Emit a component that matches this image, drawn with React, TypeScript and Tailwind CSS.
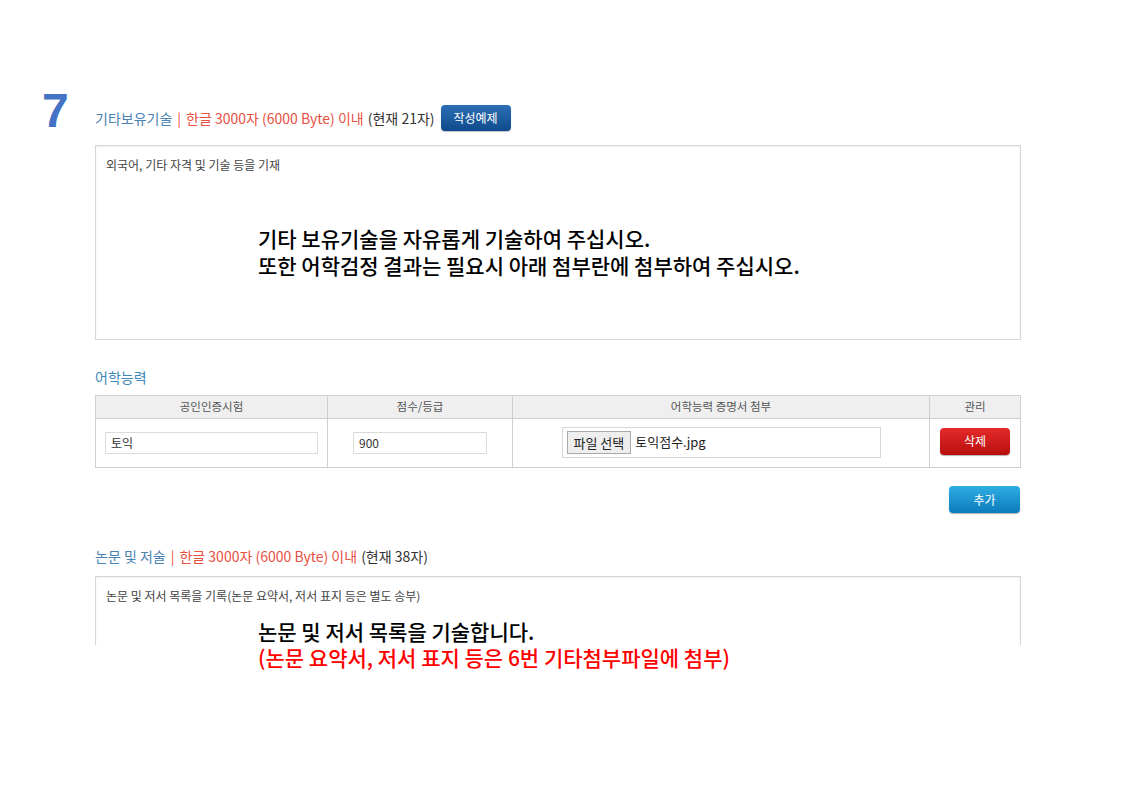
const KR = "font-['Noto_Sans_CJK_KR','Noto_Sans',sans-serif]";

const Heading = ({ title, count }: { title: string; count: number }) => (
  <div className={`flex items-center h-[26px] text-[14px] ${KR}`}>
    <span className="text-[#4a82b2]">{title}</span>
    <span className="text-[#e8503f] mx-[5px]">|</span>
    <span className="text-[#e8503f]">한글 3000자 (6000 Byte) 이내</span>
    <span className="text-[#333] ml-[4px]">(현재 {count}자)</span>
  </div>
);

const TextBox = ({
  placeholder,
  heightClass,
  bottom = true,
  children,
}: {
  placeholder: string;
  heightClass: string;
  bottom?: boolean;
  children: React.ReactNode;
}) => (
  <div
    className={`${heightClass} border-x border-t border-[#d6d6d6] shadow-[inset_0_1px_2px_rgba(0,0,0,0.07)] ${
      bottom ? "border-b" : ""
    } bg-white`}
  >
    <p className={`pl-[10px] pt-[11px] text-[12px] leading-[16px] text-[#444] ${KR}`}>
      {placeholder}
    </p>
    {children}
  </div>
);

export default function App() {
  return (
    <div className="w-[1121px] h-[793px] bg-white overflow-hidden">
      <div className="flex pt-[87px] pl-[42px]">
        <div className="w-[53px] text-[48px] font-bold leading-none text-[#4472c4] font-['Liberation_Sans',Arial,sans-serif]">
          7
        </div>

        <div className="w-[926px] mt-[18px]">
          <div className="flex items-center">
            <Heading title="기타보유기술" count={21} />
            <button
              className={`ml-[6px] w-[70px] h-[26px] rounded-[4px] bg-gradient-to-b from-[#2c6fb5] to-[#0e4b8d] text-white text-[12px] shadow-[0_1px_1px_rgba(0,0,0,0.25)] ${KR}`}
            >
              작성예제
            </button>
          </div>

          <div className="mt-[14px]">
            <TextBox placeholder="외국어, 기타 자격 및 기술 등을 기재" heightClass="h-[195px]">
              <div
                className={`mt-[52px] ml-[162px] text-[21px] leading-[27px] font-medium text-black ${KR}`}
              >
                <p>기타 보유기술을 자유롭게 기술하여 주십시오.</p>
                <p>또한 어학검정 결과는 필요시 아래 첨부란에 첨부하여 주십시오.</p>
              </div>
            </TextBox>
          </div>

          <p className={`mt-[27px] h-[20px] leading-[20px] text-[14px] text-[#3a86b8] ${KR}`}>
            어학능력
          </p>

          <table className={`mt-[8px] w-full border-collapse ${KR}`}>
            <thead>
              <tr className="h-[23px] bg-[#efefef] text-[11.5px] text-[#555]">
                <th className="w-[232px] border border-[#cfcfcf] font-normal">공인인증시험</th>
                <th className="w-[185px] border border-[#cfcfcf] font-normal">점수/등급</th>
                <th className="w-[417px] border border-[#cfcfcf] font-normal">어학능력 증명서 첨부</th>
                <th className="border border-[#cfcfcf] font-normal">관리</th>
              </tr>
            </thead>
            <tbody>
              <tr className="h-[49px]">
                <td className="border border-[#cfcfcf]">
                  <div className="mx-auto w-[213px] h-[22px] border border-[#dcdcdc] pl-[5px] text-[12px] leading-[20px] text-[#333]">
                    토익
                  </div>
                </td>
                <td className="border border-[#cfcfcf]">
                  <div className="mx-auto w-[134px] h-[22px] border border-[#dcdcdc] pl-[5px] text-[12px] leading-[20px] text-[#333]">
                    900
                  </div>
                </td>
                <td className="border border-[#cfcfcf]">
                  <div className="mx-auto w-[319px] h-[31px] border border-[#d6d6d6] flex items-center pl-[4px] gap-[4px] -translate-y-[1px]">
                    <span className="h-[23px] px-[6px] border border-[#a9a9a9] bg-[#eeeeee] text-[13px] leading-[21px] text-[#222]">
                      파일 선택
                    </span>
                    <span className="text-[13px] text-[#222]">토익점수.jpg</span>
                  </div>
                </td>
                <td className="border border-[#cfcfcf]">
                  <button className="mx-auto block w-[70px] h-[27px] rounded-[4px] bg-gradient-to-b from-[#e52a2a] to-[#b80d0d] text-white text-[12px] shadow-[0_1px_1px_rgba(0,0,0,0.3)] -translate-y-[2px]">
                    삭제
                  </button>
                </td>
              </tr>
            </tbody>
          </table>

          <div className="mt-[18px] flex justify-end pr-[1px]">
            <button
              className={`w-[71px] h-[27px] rounded-[4px] bg-gradient-to-b from-[#2eaee2] to-[#0a7bbd] text-white text-[12px] shadow-[0_1px_1px_rgba(0,0,0,0.3)] ${KR}`}
            >
              추가
            </button>
          </div>

          <div className="mt-[30px]">
            <Heading title="논문 및 저술" count={38} />
          </div>

          <div className="mt-[7px]">
            <TextBox
              placeholder="논문 및 저서 목록을 기록(논문 요약서, 저서 표지 등은 별도 송부)"
              heightClass="h-[69px]"
              bottom={false}
            >
              <div
                className={`mt-[14px] ml-[162px] text-[21px] leading-[26px] font-medium ${KR}`}
              >
                <p className="text-black">논문 및 저서 목록을 기술합니다.</p>
                <p className="text-[#ff0000]">(논문 요약서, 저서 표지 등은 6번 기타첨부파일에 첨부)</p>
              </div>
            </TextBox>
          </div>
        </div>
      </div>
    </div>
  );
}
